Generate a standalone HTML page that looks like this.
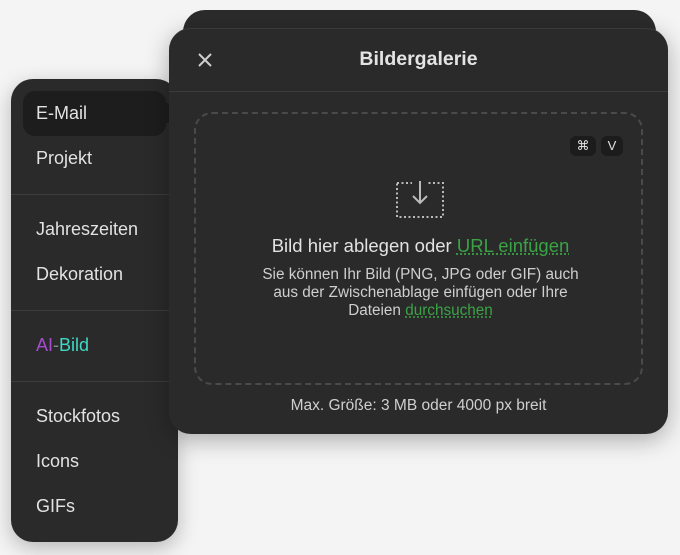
<!DOCTYPE html>
<html><head><style>
*{margin:0;padding:0;box-sizing:border-box}
body{width:680px;height:555px;background:#f4f4f4;font-family:"Liberation Sans",sans-serif;position:relative;overflow:hidden}
.back{position:absolute;left:183px;top:10px;width:473px;height:60px;background:#2b2b2b;border-radius:22px;border-bottom:1px solid #3a3a3a}
.side{position:absolute;left:11px;top:79px;width:167px;height:463px;background:#2a2a2a;border-radius:22px;box-shadow:0 6px 20px rgba(0,0,0,.25)}
.item{position:absolute;left:25px;font-size:18px;color:#e2e2e2}
.hl{position:absolute;left:12px;top:12px;width:143px;height:45px;background:#1d1d1d;border-radius:12px}
.div{position:absolute;left:0;width:167px;height:1px;background:#3c3c3c}
.main{position:absolute;left:169px;top:28px;width:499px;height:406px;background:#2a2a2a;border-radius:22px;box-shadow:0 6px 24px rgba(0,0,0,.3);border-top:1px solid #3a3a3a}
.title{position:absolute;top:19px;left:0;width:499px;text-align:center;color:#e4e4e4;font-size:19.5px;font-weight:bold}
.drop{position:absolute;left:25px;top:83px;width:449px;height:273px;border:2px dashed #4a4a4a;border-radius:18px}
.c{position:absolute;left:0;width:449px;text-align:center}
.g{color:#3aa346;text-decoration:underline dotted;text-underline-offset:2px}
.key{position:absolute;top:22px;height:20px;background:#1c1c1c;border-radius:6px;color:#e0e0e0;font-size:13px;text-align:center;line-height:20px}
</style></head><body>
<div class="back"></div>
<div class="side">
<div class="hl"></div>
<div style="position:absolute;left:148px;top:26px;width:16px;height:16px;background:#1d1d1d;transform:rotate(45deg);border-radius:3px"></div>
<div class="item" style="top:24px">E-Mail</div>
<div class="item" style="top:69px">Projekt</div>
<div class="div" style="top:115px"></div>
<div class="item" style="top:140px">Jahreszeiten</div>
<div class="item" style="top:185px">Dekoration</div>
<div class="div" style="top:231px"></div>
<div class="item" style="top:256px"><span style="color:#a54bd0">AI</span><span style="color:#888">-</span><span style="color:#3fd8c4">Bild</span></div>
<div class="div" style="top:302px"></div>
<div class="item" style="top:327px">Stockfotos</div>
<div class="item" style="top:372px">Icons</div>
<div class="item" style="top:417px">GIFs</div>
</div>
<div class="main">
<svg style="position:absolute;left:29px;top:24px" width="14" height="14"><path d="M1 1L13 13M13 1L1 13" stroke="#cfcfcf" stroke-width="2"/></svg>
<div class="title">Bildergalerie</div>
<div style="position:absolute;left:0;top:62px;width:499px;height:1px;background:#3c3c3c"></div>
<div class="drop">
<div class="key" style="left:374px;width:26px">⌘</div>
<div class="key" style="left:405px;width:22px">V</div>
<svg style="position:absolute;left:199px;top:67px" width="50" height="38"><rect x="2" y="2" width="46" height="34" fill="none" stroke="#bbb" stroke-width="2" stroke-dasharray="2 2.5"/><rect x="17" y="0" width="16" height="6" fill="#2a2a2a"/><path d="M25 0V22M18 15L25 22L32 15" fill="none" stroke="#bbb" stroke-width="2"/></svg>
<div class="c" style="top:121px;font-size:18.5px;color:#e2e2e2">Bild hier ablegen oder <span class="g">URL einfügen</span></div>
<div class="c" style="top:152px;font-size:15.3px;line-height:18px;color:#cfcfcf">Sie können Ihr Bild (PNG, JPG oder GIF) auch<br>aus der Zwischenablage einfügen oder Ihre<br>Dateien <span class="g">durchsuchen</span></div>
</div>
<div style="position:absolute;top:368px;left:0;width:499px;text-align:center;color:#cfcfcf;font-size:15.5px">Max. Größe: 3 MB oder 4000 px breit</div>
</div>
</body></html>
